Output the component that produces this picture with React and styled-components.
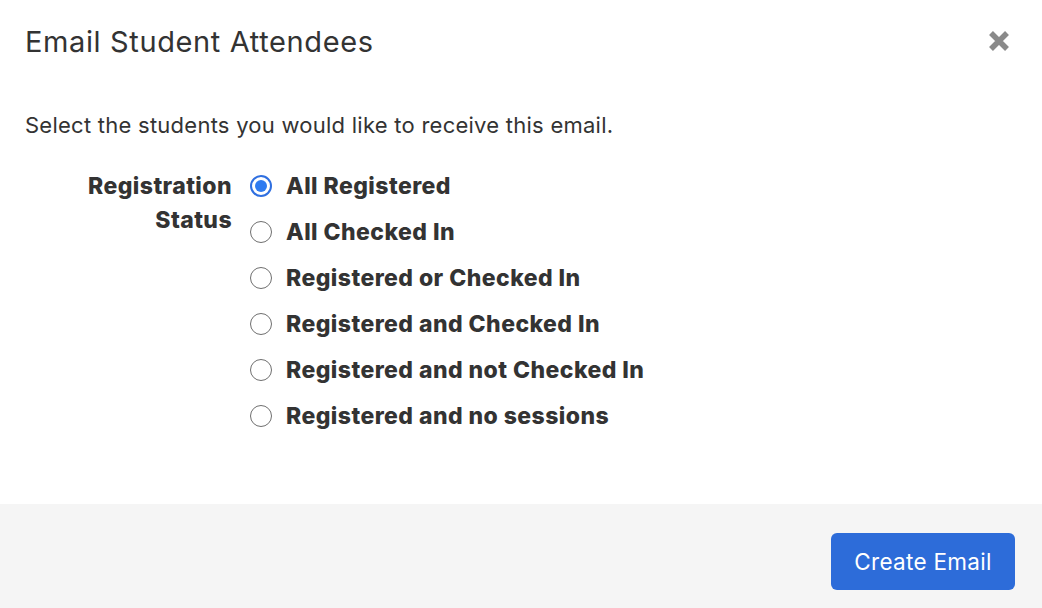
import React, { useState } from "react";
import styled, { createGlobalStyle } from "styled-components";

const Global = createGlobalStyle`
    html, body {
        margin: 0;
        padding: 0;
        background: #ffffff;
    }
    body {
        font-family: Inter, "Noto Sans", "Liberation Sans", sans-serif;
        color: #333333;
    }
`

const Modal = styled.div`
    display: flex;
    flex-direction: column;
    width: 1042px;
    height: 608px;
    background: #fff;
`
const Header = styled.div`
    display: flex;
    align-items: center;
    justify-content: space-between;
    height: 82px;
    padding: 0 28px 0 25px;
    box-sizing: border-box;
`
const Title = styled.h1`
    margin: 0;
    font-size: 29px;
    font-weight: 400;
    color: #333;
    letter-spacing: 0.62px;
`
const CloseBtn = styled.button`
    display: flex;
    align-items: center;
    justify-content: center;
    width: 30px;
    height: 30px;
    padding: 0;
    border: none;
    background: none;
    cursor: pointer;
`
const Body = styled.div`
    flex: 1;
    padding: 28px 25px 0;
`
const Intro = styled.p`
    margin: 0 0 32px;
    font-size: 22px;
    line-height: 30px;
    letter-spacing: 0.25px;
    color: #333;
`
const Field = styled.div`
    display: grid;
    grid-template-columns: 207px 1fr;
    column-gap: 17px;
`
const Label = styled.div`
    text-align: right;
    font-size: 23px;
    font-weight: 800;
    line-height: 34px;
    letter-spacing: 0.42px;
    color: #333;
    margin-top: -3px;
`
const Options = styled.div`
    display: flex;
    flex-direction: column;
    gap: 18px;
`
const Option = styled.label`
    display: flex;
    align-items: center;
    gap: 14px;
    font-size: 23px;
    font-weight: 800;
    line-height: 28px;
    letter-spacing: 0.44px;
    color: #333;
    cursor: pointer;
`
const Radio = styled.span`
    box-sizing: border-box;
    width: 22px;
    height: 22px;
    margin-left: 1px;
    border-radius: 50%;
    border: ${p => (p.checked ? "2px solid #2f6fe0" : "1.5px solid #6f6f6f")};
    display: flex;
    align-items: center;
    justify-content: center;
    flex-shrink: 0;
    &::after {
        content: "";
        width: 12px;
        height: 12px;
        border-radius: 50%;
        background: #2f7bf0;
        display: ${p => (p.checked ? "block" : "none")};
    }
`
const Footer = styled.div`
    display: flex;
    justify-content: flex-end;
    align-items: flex-start;
    height: 104px;
    padding: 29px 27px 0;
    box-sizing: border-box;
    background: #f5f5f5;
`
const Primary = styled.button`
    height: 57px;
    width: 184px;
    padding: 0;
    border: none;
    border-radius: 6px;
    background: #2d6cd9;
    color: #fff;
    font-family: inherit;
    font-size: 22.5px;
    letter-spacing: 0.3px;
    cursor: pointer;
`

const options = [
    "All Registered",
    "All Checked In",
    "Registered or Checked In",
    "Registered and Checked In",
    "Registered and not Checked In",
    "Registered and no sessions",
];

const App = () => {
    const [sel, setSel] = useState(0);
    return (
        <>
            <Global />
            <Modal>
                <Header>
                    <Title>Email Student Attendees</Title>
                    <CloseBtn aria-label="Close">
                        <svg width="24" height="24" viewBox="0 0 24 24">
                            <path d="M4 4L20 20M20 4L4 20" stroke="#8a8a8a" strokeWidth="5.5" strokeLinecap="butt" />
                        </svg>
                    </CloseBtn>
                </Header>
                <Body>
                    <Intro>Select the students you would like to receive this email.</Intro>
                    <Field>
                        <Label>Registration<br />Status</Label>
                        <Options>
                            {options.map((o, i) => (
                                <Option key={o} onClick={() => setSel(i)}>
                                    <Radio checked={sel === i} />
                                    {o}
                                </Option>
                            ))}
                        </Options>
                    </Field>
                </Body>
                <Footer>
                    <Primary>Create Email</Primary>
                </Footer>
            </Modal>
        </>
    );
};

export default App;
